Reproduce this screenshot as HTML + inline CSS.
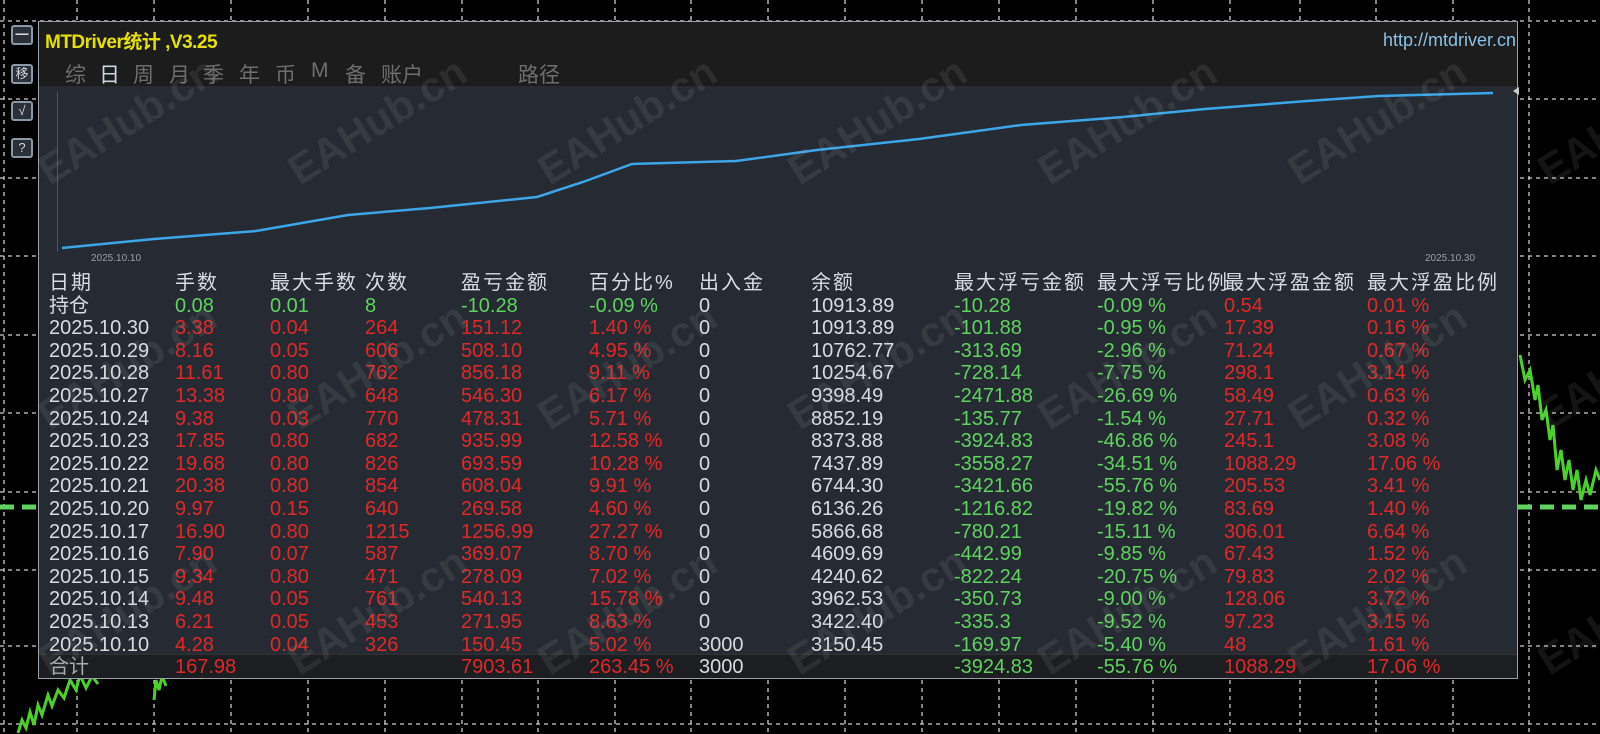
<!DOCTYPE html>
<html><head><meta charset="utf-8"><style>
*{margin:0;padding:0;box-sizing:border-box}
body{width:1600px;height:733px;background:#000;position:relative;overflow:hidden;font-family:"Liberation Sans","Noto Sans CJK SC",sans-serif}
.abs{position:absolute}
#panel{left:38px;top:21px;width:1480px;height:658px;background:#262b33;border:1px solid #9aa0a8}
#head{left:0;top:0;width:1478px;height:64px;background:#1c1c1c}
.title{left:6px;top:5px;color:#e6e000;font-size:19px;white-space:nowrap;font-weight:bold;letter-spacing:-0.5px}
.url{left:1344px;top:8px;color:#8cc0e6;font-size:18px;white-space:nowrap}
.tabs{left:26px;top:37px;color:#6e6e6e;font-size:21px;white-space:nowrap}
.tabs span{position:absolute;top:0}
.r{position:absolute;height:22px;line-height:22px;font-size:20px;white-space:nowrap;color:#d8dce2}
.h{font-size:20px;letter-spacing:2px;color:#d8dce2}
.g{color:#5fd25f}.d{color:#e02828}
.btn{position:absolute;left:11px;width:22px;height:20px;border:2px solid #8a98a8;border-radius:3px;background:#2a3038;color:#cfd6de;font-size:13px;text-align:center;line-height:16px}
.wm{position:absolute;color:rgba(200,200,200,0.10);font-size:42px;font-weight:bold;transform:rotate(-32deg);white-space:nowrap;transform-origin:center}
</style></head><body>
<svg class="abs" style="left:0;top:0" width="1600" height="733">
<g stroke="#cfcfcf" stroke-width="1.3" stroke-dasharray="4,4">
<line x1="4" y1="0" x2="4" y2="733"/><line x1="77" y1="0" x2="77" y2="733"/><line x1="154" y1="0" x2="154" y2="733"/><line x1="231" y1="0" x2="231" y2="733"/><line x1="308" y1="0" x2="308" y2="733"/><line x1="385" y1="0" x2="385" y2="733"/><line x1="462" y1="0" x2="462" y2="733"/><line x1="538" y1="0" x2="538" y2="733"/><line x1="615" y1="0" x2="615" y2="733"/><line x1="691" y1="0" x2="691" y2="733"/><line x1="768" y1="0" x2="768" y2="733"/><line x1="845" y1="0" x2="845" y2="733"/><line x1="922" y1="0" x2="922" y2="733"/><line x1="999" y1="0" x2="999" y2="733"/><line x1="1076" y1="0" x2="1076" y2="733"/><line x1="1153" y1="0" x2="1153" y2="733"/><line x1="1230" y1="0" x2="1230" y2="733"/><line x1="1300" y1="0" x2="1300" y2="733"/><line x1="1376" y1="0" x2="1376" y2="733"/><line x1="1453" y1="0" x2="1453" y2="733"/><line x1="1529" y1="0" x2="1529" y2="733"/>
<line x1="0" y1="21" x2="1600" y2="21"/><line x1="0" y1="99" x2="1600" y2="99"/><line x1="0" y1="178" x2="1600" y2="178"/><line x1="0" y1="256" x2="1600" y2="256"/><line x1="0" y1="335" x2="1600" y2="335"/><line x1="0" y1="413" x2="1600" y2="413"/><line x1="0" y1="492" x2="1600" y2="492"/><line x1="0" y1="570" x2="1600" y2="570"/><line x1="0" y1="646" x2="1600" y2="646"/><line x1="0" y1="724" x2="1600" y2="724"/>
</g>
<line x1="0" y1="507" x2="1600" y2="507" stroke="#5fd25f" stroke-width="5" stroke-dasharray="14,8"/>
<polyline fill="none" stroke="#4cd02a" stroke-width="3" points="1520,355 1525,380 1530,370 1535,400 1538,385 1542,420 1546,410 1550,440 1553,425 1557,470 1561,450 1565,480 1569,460 1573,490 1577,470 1581,500 1586,480 1590,495 1596,470 1600,480"/>
<polyline fill="none" stroke="#4cd02a" stroke-width="3" points="18,733 22,720 26,728 30,712 34,725 38,705 42,715 48,695 52,706 58,690 64,698 70,680 76,690 80,675 86,688 92,676 98,684"/>
<polyline fill="none" stroke="#4cd02a" stroke-width="3" points="154,700 156,680 159,690 162,676 166,686"/>
</svg>
<div class="btn" style="top:25px">━</div>
<div class="btn" style="top:64px">移</div>
<div class="btn" style="top:101px">√</div>
<div class="btn" style="top:138px">?</div>

<div id="panel" class="abs">
<div id="head" class="abs"></div>
<div class="abs title">MTDriver统计 ,V3.25</div>
<div class="abs url">http://mtdriver.cn</div>
<div class="abs tabs"><span style="left:0">综</span><span style="left:34px;color:#c9d6e6">日</span><span style="left:68px">周</span><span style="left:104px">月</span><span style="left:138px">季</span><span style="left:174px">年</span><span style="left:210px">币</span><span style="left:246px">M</span><span style="left:280px">备</span><span style="left:316px">账户</span><span style="left:453px">路径</span></div>
<div class="abs" style="left:18px;top:70px;width:1px;height:160px;background:#555"></div>
<svg class="abs" style="left:-38px;top:-21px" width="1600" height="733">
<polyline fill="none" stroke="#3ba6e8" stroke-width="2.5" points="61,247 153,238 255,230 347,214 429,207 536,196 582,181 631,163 735,160 816,149 918,138 1020,124 1122,116 1204,108 1306,100 1378,95 1492,92"/>
<polygon points="1518,86 1512,90 1518,94" fill="#ccc"/>
<text x="90" y="260" fill="#9aa0a8" font-size="10" font-family="Liberation Sans">2025.10.10</text>
<text x="1424" y="260" fill="#9aa0a8" font-size="10" font-family="Liberation Sans">2025.10.30</text>
</svg>
<div class="abs" style="left:0;top:632px;width:1478px;height:24px;background:#1c1e22;border-top:1px solid #333"></div>
</div>

<div id="tbl"></div>
<script>
var cols=[49,175,270,365,461,589,699,811,954,1097,1224,1367];
var rows=[
["h","日期","手数","最大手数","次数","盈亏金额","百分比%","出入金","余额","最大浮亏金额","最大浮亏比例","最大浮盈金额","最大浮盈比例"],
["g","持仓","0.08","0.01","8","-10.28","-0.09 %","0","10913.89","-10.28","-0.09 %","0.54","0.01 %"],
["d","2025.10.30","3.38","0.04","264","151.12","1.40 %","0","10913.89","-101.88","-0.95 %","17.39","0.16 %"],
["d","2025.10.29","8.16","0.05","606","508.10","4.95 %","0","10762.77","-313.69","-2.96 %","71.24","0.67 %"],
["d","2025.10.28","11.61","0.80","762","856.18","9.11 %","0","10254.67","-728.14","-7.75 %","298.1","3.14 %"],
["d","2025.10.27","13.38","0.80","648","546.30","6.17 %","0","9398.49","-2471.88","-26.69 %","58.49","0.63 %"],
["d","2025.10.24","9.38","0.03","770","478.31","5.71 %","0","8852.19","-135.77","-1.54 %","27.71","0.32 %"],
["d","2025.10.23","17.85","0.80","682","935.99","12.58 %","0","8373.88","-3924.83","-46.86 %","245.1","3.08 %"],
["d","2025.10.22","19.68","0.80","826","693.59","10.28 %","0","7437.89","-3558.27","-34.51 %","1088.29","17.06 %"],
["d","2025.10.21","20.38","0.80","854","608.04","9.91 %","0","6744.30","-3421.66","-55.76 %","205.53","3.41 %"],
["d","2025.10.20","9.97","0.15","640","269.58","4.60 %","0","6136.26","-1216.82","-19.82 %","83.69","1.40 %"],
["d","2025.10.17","16.90","0.80","1215","1256.99","27.27 %","0","5866.68","-780.21","-15.11 %","306.01","6.64 %"],
["d","2025.10.16","7.90","0.07","587","369.07","8.70 %","0","4609.69","-442.99","-9.85 %","67.43","1.52 %"],
["d","2025.10.15","9.34","0.80","471","278.09","7.02 %","0","4240.62","-822.24","-20.75 %","79.83","2.02 %"],
["d","2025.10.14","9.48","0.05","761","540.13","15.78 %","0","3962.53","-350.73","-9.00 %","128.06","3.72 %"],
["d","2025.10.13","6.21","0.05","453","271.95","8.63 %","0","3422.40","-335.3","-9.52 %","97.23","3.15 %"],
["d","2025.10.10","4.28","0.04","326","150.45","5.02 %","3000","3150.45","-169.97","-5.40 %","48","1.61 %"],
["t","合计","167.98","","","7903.61","263.45 %","3000","","-3924.83","-55.76 %","1088.29","17.06 %"]];
var h="";
rows.forEach(function(r,i){
 var top=Math.round(283+22.6*i-11);
 for(var c=1;c<r.length;c++){
  var cls="";
  if(r[0]=="h")cls="h";
  else if(c==1)cls="";
  else if(c==7||c==8)cls="";
  else if(c==9||c==10)cls="g";
  else if(c==11||c==12)cls="d";
  else if(r[0]=="g")cls="g";
  else cls="d";
  if(r[0]=="t"&&c==1)cls="tt";
  h+='<div class="r '+cls+'" style="left:'+cols[c-1]+'px;top:'+top+'px'+(cls=="tt"?';color:#aaa':'')+'">'+r[c]+'</div>';
 }
});
document.getElementById("tbl").innerHTML=h;
var w="";
[122,367,612].forEach(function(y){for(var k=0;k<7;k++){var x=117+250*k;w+='<div class="wm" style="left:'+(x-90)+'px;top:'+(y-25)+'px">EAHub.cn</div>';}});
document.body.insertAdjacentHTML("beforeend",w);
</script>
</body></html>
